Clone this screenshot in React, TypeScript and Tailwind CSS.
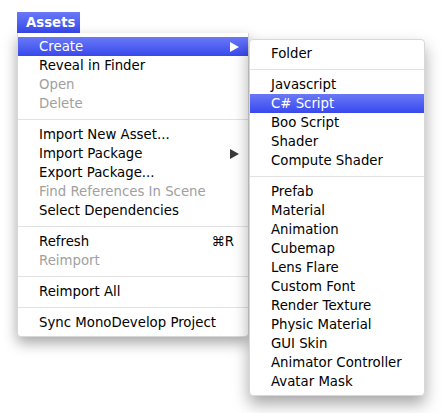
type Item =
  | { sep: true }
  | { sep?: false; label: string; disabled?: boolean; active?: boolean; sub?: boolean; key?: string };

const mainItems: Item[] = [
  { label: 'Create', active: true, sub: true },
  { label: 'Reveal in Finder' },
  { label: 'Open', disabled: true },
  { label: 'Delete', disabled: true },
  { sep: true },
  { label: 'Import New Asset...' },
  { label: 'Import Package', sub: true },
  { label: 'Export Package...' },
  { label: 'Find References In Scene', disabled: true },
  { label: 'Select Dependencies' },
  { sep: true },
  { label: 'Refresh', key: '⌘R' },
  { label: 'Reimport', disabled: true },
  { sep: true },
  { label: 'Reimport All' },
  { sep: true },
  { label: 'Sync MonoDevelop Project' },
];

const subItems: Item[] = [
  { label: 'Folder' },
  { sep: true },
  { label: 'Javascript' },
  { label: 'C# Script', active: true },
  { label: 'Boo Script' },
  { label: 'Shader' },
  { label: 'Compute Shader' },
  { sep: true },
  { label: 'Prefab' },
  { label: 'Material' },
  { label: 'Animation' },
  { label: 'Cubemap' },
  { label: 'Lens Flare' },
  { label: 'Custom Font' },
  { label: 'Render Texture' },
  { label: 'Physic Material' },
  { label: 'GUI Skin' },
  { label: 'Animator Controller' },
  { label: 'Avatar Mask' },
];

const Arrow = ({ white }: { white?: boolean }) => (
  <svg width="9" height="10" viewBox="0 0 9 10">
    <path d="M0 0 L9 5 L0 10 Z" fill={white ? '#ffffff' : '#3a3a3a'} />
  </svg>
);

const MenuList = ({ items }: { items: Item[] }) => (
  <>
    {items.map((it, i) =>
      it.sep ? (
        <div key={i} className="flex h-[12px] items-center">
          <div className="h-px w-full bg-[#e2e2e2]" />
        </div>
      ) : (
        <div
          key={i}
          className={`flex h-[19px] items-center justify-between pl-[21px] pr-[9px] ${
            it.active
              ? 'bg-gradient-to-b from-[#6a78f6] to-[#3947ee] text-white'
              : it.disabled
                ? 'text-[#a0a0a0]'
                : 'text-black'
          }`}
        >
          <span>{it.label}</span>
          {it.sub && <Arrow white={it.active} />}
          {it.key && <span className="pr-[5px]">{it.key}</span>}
        </div>
      ),
    )}
  </>
);

export default function App() {
  return (
    <div className="h-[413px] w-[446px] bg-white pl-[17px] pt-[12px] text-[13.3px] leading-none [font-family:'DejaVu_Sans',sans-serif]">
      <div className="flex items-start">
        <div className="flex w-[232px] flex-col">
          <div className="flex h-[21px] w-[63px] items-center bg-gradient-to-b from-[#6a78f6] to-[#3947ee] pl-[9px] font-bold text-white">
            Assets
          </div>
          <div className="rounded-b-[4px] border border-t-0 border-[#d8d8d8] bg-white py-[4px] shadow-[0_6px_14px_rgba(0,0,0,0.35)]">
            <MenuList items={mainItems} />
          </div>
        </div>
        <div className="mt-[27px] w-[176px] rounded-[4px] border border-[#d8d8d8] bg-white py-[4px] shadow-[0_8px_16px_rgba(0,0,0,0.35)]">
          <MenuList items={subItems} />
        </div>
      </div>
    </div>
  );
}
